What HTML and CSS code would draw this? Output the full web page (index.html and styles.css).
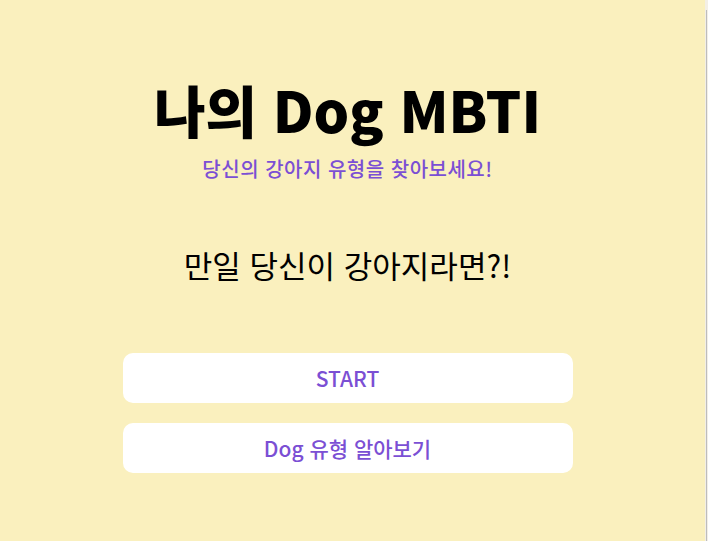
FILE: index.html
```html
<!DOCTYPE html>
<html lang="ko">
<head>
<meta charset="utf-8">
<title>나의 Dog MBTI</title>
<link rel="stylesheet" href="styles.css">
</head>
<body>
<div class="page">
  <main class="main">
    <h1 class="title">나의 Dog MBTI</h1>
    <p class="subtitle">당신의 강아지 유형을 찾아보세요!</p>
    <p class="question">만일 당신이 강아지라면?!</p>
    <div class="buttons">
      <button class="btn">START</button>
      <button class="btn">Dog 유형 알아보기</button>
    </div>
  </main>
  <div class="edge"><div class="edge-bar"></div></div>
</div>
</body>
</html>
```
FILE: styles.css
```css
html, body {
  margin: 0;
  padding: 0;
  height: 100%;
}
body {
  background: #faf0be;
  font-family: "Noto Sans CJK KR", "Noto Sans", sans-serif;
}
.page {
  display: flex;
  height: 100%;
}
.main {
  flex: 1;
  display: flex;
  flex-direction: column;
  align-items: center;
  padding-right: 10px;
  padding-top: 77px;
}
.title {
  margin: 0;
  font-size: 56px;
  font-weight: 900;
  color: #000;
  line-height: 64px;
}
.subtitle {
  margin: 15px 0 0;
  font-size: 20px;
  font-weight: 500;
  color: #7b4fd4;
  line-height: 26px;
  letter-spacing: 0.5px;
}
.question {
  margin: 63px 0 0;
  font-size: 31px;
  font-weight: 400;
  color: #000;
  line-height: 40px;
}
.buttons {
  margin-top: 68px;
  display: flex;
  flex-direction: column;
  gap: 20px;
}
.btn {
  width: 450px;
  height: 50px;
  border: none;
  border-radius: 10px;
  background: #fff;
  color: #7b4fd4;
  font-family: "Noto Sans CJK KR", "Noto Sans", sans-serif;
  font-size: 21px;
  font-weight: 500;
  padding: 0;
}
.edge {
  width: 3px;
  background: #f3efe6;
  display: flex;
  justify-content: center;
}
.edge-bar {
  width: 1px;
  margin-top: 10px;
  background: #bdbdbd;
}
```
